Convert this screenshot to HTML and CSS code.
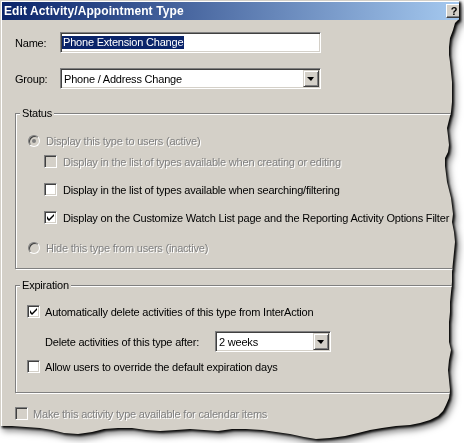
FILE: index.html
```html
<!DOCTYPE html>
<html lang="en">
<head>
  <meta charset="UTF-8" />
  <title>Edit Activity/Appointment Type</title>
  <link rel="stylesheet" href="styles.css">
</head>
<body>

  <div class="shadow">
    <div class="dialog">
      <div class="titlebar">
        <span class="title">Edit Activity/Appointment Type</span>
        <span class="help-btn">?</span>
      </div>

      <div class="content">
        <div class="field-row">
          <label class="field-label">Name:</label>
          <div class="textbox"><span class="selected">Phone Extension Change</span></div>
        </div>

        <div class="field-row row-group">
          <label class="field-label">Group:</label>
          <div class="combo combo-group">
            <span class="combo-text">Phone / Address Change</span>
            <span class="combo-btn"><span class="arrow"></span></span>
          </div>
        </div>

        <fieldset class="groupbox status-box">
          <legend>Status</legend>
          <div class="option radio-opt disabled opt-active">
            <span class="radio checked"></span>Display this type to users (active)
          </div>
          <div class="option sub-opt disabled opt-creating">
            <span class="checkbox"></span>Display in the list of types available when creating or editing
          </div>
          <div class="option sub-opt opt-searching">
            <span class="checkbox"></span>Display in the list of types available when searching/filtering
          </div>
          <div class="option sub-opt opt-watch">
            <span class="checkbox checked">
              <svg width="7" height="7" viewBox="0 0 7 7"><path d="M0 2v3l2 2l5-5v-2l-5 5z" fill="#000"/></svg>
            </span>Display on the Customize Watch List page and the Reporting Activity Options Filter
          </div>
          <div class="option radio-opt disabled opt-inactive">
            <span class="radio"></span>Hide this type from users (inactive)
          </div>
        </fieldset>

        <fieldset class="groupbox expire-box">
          <legend>Expiration</legend>
          <div class="option exp-opt opt-autodelete">
            <span class="checkbox checked">
              <svg width="7" height="7" viewBox="0 0 7 7"><path d="M0 2v3l2 2l5-5v-2l-5 5z" fill="#000"/></svg>
            </span>Automatically delete activities of this type from InterAction
          </div>
          <div class="after-row">
            <span class="after-label">Delete activities of this type after:</span>
            <div class="combo combo-after">
              <span class="combo-text">2 weeks</span>
              <span class="combo-btn"><span class="arrow"></span></span>
            </div>
          </div>
          <div class="option exp-opt opt-override">
            <span class="checkbox"></span>Allow users to override the default expiration days
          </div>
        </fieldset>

        <div class="option disabled opt-calendar">
          <span class="checkbox"></span>Make this activity type available for calendar items
        </div>
      </div>
    </div>
  </div>

</body>
</html>
```

FILE: styles.css
```css
body {
  margin: 0;
  background: #fff;
}

/* torn paper edge: the dialog is clipped, the wrapper casts the shadow */
.shadow {
  width: 464px;
  height: 443px;
  filter: drop-shadow(2px 2px 1px rgba(0, 0, 0, 0.95)) drop-shadow(2px 3px 3px rgba(0, 0, 0, 0.5));
}

.dialog {
  box-sizing: border-box;
  width: 464px;
  height: 443px;
  padding: 1px;
  border: 1px solid #d4d0c8;
  box-shadow: inset 1px 1px 0 #fff;
  background: #d4d0c8;
  font-family: "Liberation Sans", Arial, sans-serif;
  font-size: 11px;
  letter-spacing: -0.2px;
  color: #000;
  clip-path: polygon(0 0, 459px 0, 459px 19px, 455px 23px, 453px 30px, 450px 38px, 449px 47px, 449px 55px, 450px 62px, 451px 72px, 452px 82px, 452px 92px, 452px 102px, 451px 112px, 449px 120px, 447px 128px, 448px 136px, 449px 145px, 448px 152px, 445px 158px, 445px 166px, 446px 174px, 447px 182px, 449px 190px, 451px 198px, 452px 206px, 453px 214px, 452px 222px, 454px 232px, 455px 242px, 454px 252px, 453px 262px, 452px 272px, 452px 282px, 451px 292px, 450px 302px, 450px 312px, 449px 322px, 449px 332px, 449px 342px, 451px 350px, 449px 360px, 448px 370px, 449px 380px, 450px 390px, 449px 398px, 446px 405px, 443px 411px, 438px 416px, 430px 420px, 420px 423px, 410px 425px, 396px 426px, 382px 428px, 370px 430px, 358px 433px, 345px 436px, 330px 438px, 316px 439px, 304px 437px, 290px 434px, 276px 432px, 262px 430px, 246px 429px, 232px 429px, 218px 431px, 204px 430px, 190px 429px, 176px 430px, 160px 431px, 146px 430px, 132px 428px, 118px 428px, 104px 429px, 92px 432px, 78px 434px, 64px 433px, 52px 430px, 40px 428px, 26px 427px, 12px 426px, 0 426px);
}

.titlebar {
  display: flex;
  align-items: center;
  height: 18px;
  background: linear-gradient(to right, #0a246a, #a6caf0);
}

.title {
  flex: 1;
  padding-left: 2px;
  color: #fff;
  font-size: 12px;
  font-weight: bold;
  letter-spacing: 0.1px;
}

.help-btn {
  box-sizing: border-box;
  width: 16px;
  height: 14px;
  border: 1px solid;
  border-color: #fff #404040 #404040 #fff;
  box-shadow: inset -1px -1px 0 #808080;
  background: #d4d0c8;
  font-weight: bold;
  line-height: 12px;
  text-align: center;
  color: #000;
}

.content {
  padding: 12px 0 0 13px;
}

.field-row {
  display: flex;
  align-items: center;
  height: 21px;
}

.row-group {
  margin-top: 15px;
}

.field-label {
  width: 45px;
}

/* sunken 3d frame shared by text boxes and combos */
.textbox,
.combo {
  box-sizing: border-box;
  height: 21px;
  padding: 1px;
  border: 1px solid;
  border-color: #808080 #fff #fff #808080;
  box-shadow: inset 1px 1px 0 #404040, inset -1px -1px 0 #d4d0c8;
  background: #fff;
  display: flex;
  align-items: center;
}

.textbox {
  width: 261px;
}

.selected {
  padding: 0 1px;
  line-height: 13px;
  background: #0a246a;
  color: #fff;
}

.combo-group {
  width: 261px;
}

.combo-text {
  flex: 1;
  padding-left: 2px;
}

.combo-btn {
  box-sizing: border-box;
  width: 16px;
  height: 17px;
  border: 1px solid;
  border-color: #d4d0c8 #404040 #404040 #d4d0c8;
  box-shadow: inset 1px 1px 0 #fff, inset -1px -1px 0 #808080;
  background: #d4d0c8;
  display: flex;
  align-items: center;
  justify-content: center;
}

.arrow {
  width: 0;
  height: 0;
  border-left: 4px solid transparent;
  border-right: 3px solid transparent;
  border-top: 4px solid #000;
  margin-left: -1px;
}

/* etched group boxes */
.groupbox {
  box-sizing: border-box;
  width: 444px;
  margin: 0;
  padding: 0;
  border: 1px solid #808080;
  box-shadow: inset 1px 1px 0 #fff, 1px 1px 0 #fff;
}

.groupbox legend {
  margin-left: 4px;
  padding: 0 2px;
  line-height: 13px;
  background: #d4d0c8;
}

.status-box {
  margin-top: 18px;
  padding-bottom: 14px;
}

.expire-box {
  margin-top: 10px;
  padding-bottom: 19px;
}

.option {
  display: flex;
  align-items: center;
  height: 13px;
}

.disabled {
  color: #808080;
  text-shadow: 1px 1px 0 #fff;
}

.radio-opt {
  padding-left: 12px;
}

.sub-opt {
  padding-left: 28px;
}

.exp-opt {
  padding-left: 11px;
}

.opt-active {
  margin-top: 14px;
}

.opt-creating {
  margin-top: 8px;
}

.opt-searching,
.opt-watch {
  margin-top: 15px;
}

.opt-inactive {
  margin-top: 17px;
}

.opt-autodelete {
  margin-top: 13px;
}

.opt-override {
  margin-top: 8px;
}

.opt-calendar {
  margin-top: 14px;
  padding-left: 0;
}

.radio {
  box-sizing: border-box;
  width: 12px;
  height: 12px;
  margin-right: 6px;
  border-radius: 50%;
  border: 1px solid;
  border-color: #808080 #fff #fff #808080;
  box-shadow: inset 1px 1px 0 #404040, inset -1px -1px 0 #d4d0c8;
  background: #fff;
  display: flex;
  align-items: center;
  justify-content: center;
}

.disabled .radio {
  background: #d4d0c8;
}

.radio.checked::after {
  content: "";
  width: 4px;
  height: 4px;
  border-radius: 50%;
  background: #000;
}

.disabled .radio.checked::after {
  background: #808080;
}

.checkbox {
  box-sizing: border-box;
  width: 13px;
  height: 13px;
  margin-right: 6px;
  border: 1px solid;
  border-color: #808080 #fff #fff #808080;
  box-shadow: inset 1px 1px 0 #404040, inset -1px -1px 0 #d4d0c8;
  background: #fff;
  display: flex;
  align-items: center;
  justify-content: center;
}

.exp-opt .checkbox,
.opt-calendar .checkbox {
  margin-right: 5px;
}

.disabled .checkbox {
  background: #d4d0c8;
}

.after-row {
  display: flex;
  align-items: center;
  margin-top: 13px;
  padding-left: 29px;
}

.after-label {
  width: 170px;
}

.combo-after {
  width: 116px;
}
```
